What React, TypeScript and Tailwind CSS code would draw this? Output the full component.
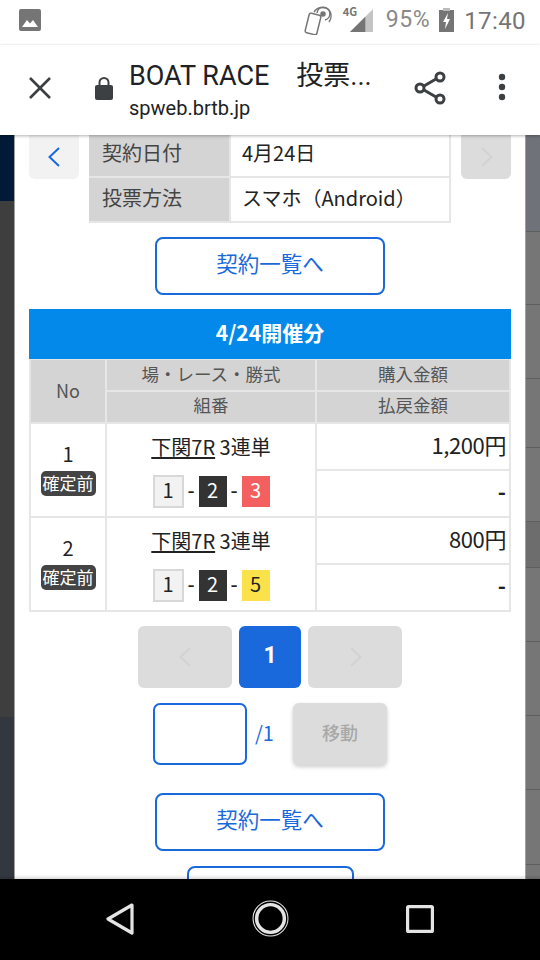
import React from "react";

const F = "font-['Noto_Sans_CJK_JP','Noto_Sans',sans-serif]";

function ListBtn() {
  return (
    <div className="w-[230px] h-[58px] mx-auto border-2 border-[#1a69dc] rounded-[8px] flex items-center justify-center pb-[5px] text-[#1a69dc] text-[21.5px] bg-white">
      契約一覧へ
    </div>
  );
}

function Chevron({ dir, color }: { dir: "l" | "r"; color: string }) {
  return (
    <svg width="24" height="24" viewBox="0 0 24 24" fill="none" stroke={color} strokeWidth="2">
      <path d={dir === "l" ? "M17 3 L7.5 12 L17 21" : "M8 3 L17.5 12 L8 21"} />
    </svg>
  );
}

function Boat({ n, cls }: { n: string; cls: string }) {
  return <div className={`w-[28px] h-[31px] flex items-center justify-center pb-[3px] text-[20px] ${cls}`}>{n}</div>;
}

function Dash() {
  return <span className="w-[15px] text-center pb-[3px] font-medium">-</span>;
}

function Bet({ last, lastCls }: { last: string; lastCls: string }) {
  return (
    <div className="flex items-center text-[#222] text-[20px] leading-none">
      <div className="w-[31px] h-[33px] flex items-center justify-center pb-[3px] text-[20px] bg-[#f2f2f2] border-2 border-[#d8d8d8]">1</div>
      <Dash />
      <Boat n="2" cls="bg-[#333] text-white" />
      <Dash />
      <Boat n={last} cls={lastCls} />
    </div>
  );
}

function Row({ no, amount, last, lastCls }: { no: string; amount: string; last: string; lastCls: string }) {
  return (
    <div className="grid grid-cols-[74px_208px_192px] gap-x-[2px] bg-[#e6e6e6] pb-[2px]">
      <div className="bg-white h-[92px] flex flex-col items-center pt-[18px]">
        <div className="text-[20px] leading-[24px] text-[#222]">{no}</div>
        <div className="mt-[5px] w-[55px] h-[25px] rounded-[5px] bg-[#444] text-white text-[17px] leading-[23px] text-center whitespace-nowrap">確定前</div>
      </div>
      <div className="bg-white h-[92px] flex flex-col items-center pt-[8px]">
        <div className="text-[20px] leading-[30px] text-[#222] h-[43px]"><span className="underline underline-offset-2">下関7R</span> 3連単</div>
        <Bet last={last} lastCls={lastCls} />
      </div>
      <div className="bg-[#e6e6e6] h-[92px] flex flex-col gap-[2px]">
        <div className="bg-white h-[45px] flex items-center justify-end pr-[3px] pb-[5px] text-[22px] text-[#222] tracking-[-0.4px]">{amount}</div>
        <div className="bg-white h-[45px] flex items-center justify-end pr-[3px] pb-[7px] text-[22px] font-bold text-[#222]">-</div>
      </div>
    </div>
  );
}

const SIDE_ROWS = [
  { h: 97, c: "bg-[#6f7278]" },
  { h: 73, c: "bg-[#767676]" },
  { h: 74, c: "bg-[#767676]" },
  { h: 69, c: "bg-[#767676]" },
  { h: 74, c: "bg-[#767676]" },
  { h: 46, c: "bg-[#6d6d6d]" },
  { h: 74, c: "bg-[#767676]" },
  { h: 74, c: "bg-[#767676]" },
  { h: 74, c: "bg-[#767676]" },
  { h: 75, c: "bg-[#767676]" },
];

export default function App() {
  return (
    <div className={`w-[540px] h-[960px] overflow-hidden flex flex-col bg-black ${F}`}>
      {/* status bar */}
      <div className="h-[45px] bg-white flex items-center pl-[19px] pr-[14px] pb-[5px] shrink-0">
        <svg width="22" height="22" viewBox="0 0 22 22">
          <rect width="22" height="22" rx="2" fill="#757575" />
          <path d="M3 18 L8 11 L11 14.5 L14 11 L19 18 Z" fill="#fff" />
        </svg>
        <div className="flex-1" />
        <svg width="30" height="30" viewBox="0 0 30 30" fill="none" stroke="#757575" strokeWidth="1.5">
          <rect x="5" y="9" width="12" height="20" rx="2" transform="rotate(14 11 19)" />
          <circle cx="21" cy="9" r="2" fill="#757575" />
          <path d="M15 8 a6.5 6.5 0 1 1 8 7" />
          <path d="M12 7 a10 10 0 0 1 15 -2 a10 10 0 0 1 0 12" />
        </svg>
        <div className="relative w-[30px] h-[30px] ml-[8px]">
          <svg width="23" height="23" viewBox="0 0 24 24" className="absolute left-[10px] top-[4px]">
            <path d="M0 24 L24 0 L24 24 Z" fill="#c4c4c4" />
            <path d="M0 24 L16 8 L16 24 Z" fill="#757575" />
          </svg>
          <span className="absolute left-[3px] top-[-1px] text-[11px] leading-[14px] font-bold text-[#757575]">4G</span>
        </div>
        <span className="text-[23px] ml-[16px] text-[#8a8a8a] font-['Roboto',sans-serif] tracking-[0.6px]">95%</span>
        <svg width="15" height="24" viewBox="0 0 15 24" className="ml-[9px]">
          <rect y="2" width="15" height="22" fill="#757575" />
          <rect x="4" y="0" width="7" height="3" fill="#bbb" />
          <path d="M9 5 L4 14 L7 14 L6 21 L11 11 L8 11 Z" fill="#fff" />
        </svg>
        <span className="text-[24px] ml-[10px] mt-[1px] text-[#757575] font-['Roboto',sans-serif] tracking-[0.4px]">17:40</span>
      </div>
      {/* url bar */}
      <div className="h-[90px] bg-white flex items-start shrink-0 relative z-10 shadow-[0_1px_3px_rgba(0,0,0,0.3)]">
        <svg width="24" height="24" viewBox="0 0 24 24" className="ml-[28px] mt-[31px]" fill="none" stroke="#3c4043" strokeWidth="2.6">
          <path d="M2 2 L22 22 M22 2 L2 22" />
        </svg>
        <svg width="18" height="24" viewBox="0 0 18 24" className="ml-[43px] mt-[31px]">
          <path d="M4.5 9 V6.5 a4.5 4.5 0 0 1 9 0 V9" fill="none" stroke="#3c4043" strokeWidth="2" />
          <rect y="9" width="18" height="15" rx="2" fill="#3c4043" />
        </svg>
        <div className="ml-[16px] mt-[13px] w-[268px]">
          <div className="text-[27px] leading-[36px] text-[#202124] font-['Roboto','Noto_Sans_CJK_JP',sans-serif] whitespace-pre">BOAT RACE　投票...</div>
          <div className="text-[20px] leading-[24px] mt-[2px] text-[#202124] font-['Roboto',sans-serif]">spweb.brtb.jp</div>
        </div>
        <svg width="32" height="34" viewBox="0 0 32 34" className="ml-[17px] mt-[26px]" fill="none" stroke="#3c4043" strokeWidth="3">
          <circle cx="6" cy="17" r="4" />
          <circle cx="26" cy="6" r="4" />
          <circle cx="26" cy="28" r="4" />
          <path d="M10 15 L22 8 M10 19 L22 26" />
        </svg>
        <svg width="8" height="28" viewBox="0 0 8 28" className="ml-[52px] mt-[28px]" fill="#3c4043">
          <circle cx="4" cy="4" r="3.2" />
          <circle cx="4" cy="14" r="3.2" />
          <circle cx="4" cy="24" r="3.2" />
        </svg>
      </div>
      {/* page */}
      <div className="h-[744px] shrink-0 overflow-hidden relative bg-[#767676] flex">
        <div className="w-[14px] shrink-0 flex flex-col">
          <div className="h-[66px] bg-[#001a38]" />
          <div className="h-[516px] bg-[#3e3e3e]" />
          <div className="flex-1 bg-[#333840]" />
        </div>
        <div className="w-[512px] shrink-0 bg-white px-[14px] border-x border-[#a0a0a0]">
          {/* top section */}
          <div className="flex h-[88px] items-start justify-between">
            <div className="w-[50px] h-[44px] bg-[#f2f2f2] rounded-b-[6px] flex items-center justify-center">
              <Chevron dir="l" color="#1a69dc" />
            </div>
            <div className="w-[362px] bg-[#e6e6e6] grid grid-cols-[140px_1fr] gap-[2px] pb-[2px] pr-[2px] text-[20px]">
              <div className="h-[41px] bg-[#d4d4d4] text-[#444] flex items-center pl-[13px] pb-[6px]">契約日付</div>
              <div className="h-[41px] bg-white text-[#222] flex items-center pl-[11px] pb-[6px]">4月24日</div>
              <div className="h-[43px] bg-[#d4d4d4] text-[#444] flex items-center pl-[13px] pb-[3px]">投票方法</div>
              <div className="h-[43px] bg-white text-[#222] flex items-center pl-[11px] pb-[3px]">スマホ（Android）</div>
            </div>
            <div className="w-[50px] h-[44px] bg-[#dcdcdc] rounded-b-[6px] flex items-center justify-center">
              <Chevron dir="r" color="#d2d2d2" />
            </div>
          </div>
          <div className="mt-[14px]"><ListBtn /></div>
          {/* table */}
          <div className="mt-[14px] w-[482px]">
            <div className="h-[50px] bg-[#0389e9] text-white font-bold text-[21px] flex items-center justify-center pb-[3px]">4/24開催分</div>
            <div className="border-x-2 border-t border-[#e6e6e6]">
              <div className="grid grid-cols-[74px_208px_192px] gap-x-[2px] bg-[#e6e6e6] pb-[2px] text-[#555] text-[17.5px]">
                <div className="bg-[#d4d4d4] flex items-center justify-center text-[18px] pb-[2px]">No</div>
                <div className="flex flex-col gap-[2px]">
                  <div className="bg-[#d4d4d4] h-[30px] flex items-center justify-center pb-[2px]">場・レース・勝式</div>
                  <div className="bg-[#d4d4d4] h-[30px] flex items-center justify-center pb-[3px]">組番</div>
                </div>
                <div className="flex flex-col gap-[2px]">
                  <div className="bg-[#d4d4d4] h-[30px] flex items-center justify-center pb-[2px]">購入金額</div>
                  <div className="bg-[#d4d4d4] h-[30px] flex items-center justify-center pb-[3px]">払戻金額</div>
                </div>
              </div>
              <Row no="1" amount="1,200円" last="3" lastCls="bg-[#f46060] text-white" />
              <Row no="2" amount="800円" last="5" lastCls="bg-[#fce24a] text-[#222]" />
            </div>
          </div>
          {/* pager */}
          <div className="mt-[14px] flex justify-center gap-[7px]">
            <div className="w-[94px] h-[62px] rounded-[6px] bg-[#dcdcdc] flex items-center justify-center"><Chevron dir="l" color="#d2d2d2" /></div>
            <div className="w-[62px] h-[62px] rounded-[6px] bg-[#1a69dc] flex items-center justify-center text-white font-bold text-[23px] font-['Roboto',sans-serif] pb-[2px]">1</div>
            <div className="w-[94px] h-[62px] rounded-[6px] bg-[#dcdcdc] flex items-center justify-center"><Chevron dir="r" color="#d2d2d2" /></div>
          </div>
          <div className="mt-[15px] flex items-center pl-[124px]">
            <div className="w-[94px] h-[62px] rounded-[7px] border-2 border-[#1a69dc] bg-white" />
            <span className="ml-[8px] text-[#1a69dc] text-[20px] pb-[3px]">/1</span>
            <div className="ml-[19px] w-[94px] h-[62px] rounded-[6px] bg-[#dcdcdc] shadow-[0_2px_4px_rgba(0,0,0,0.2)] flex items-center justify-center pb-[4px] text-[#a8a8a8] text-[18px] font-medium">移動</div>
          </div>
          <div className="mt-[28px]"><ListBtn /></div>
          <div className="mt-[15px] w-[167px] h-[40px] mx-auto border-2 border-[#1a69dc] rounded-[8px] bg-white" />
        </div>
        <div className="flex-1 flex flex-col">
          {SIDE_ROWS.map((r, i) => (
            <div key={i} style={{ height: r.h }} className={`shrink-0 border-b border-[#5e5e5e] ${r.c}`} />
          ))}
        </div>
        <div className="absolute left-0 right-0 bottom-0 h-[4px] bg-gradient-to-b from-transparent to-[rgba(0,0,0,0.15)]" />
      </div>
      {/* nav */}
      <div className="flex-1 bg-black flex items-center pb-[2px]">
        <svg width="28" height="32" viewBox="0 0 28 32" className="ml-[106px]" fill="none" stroke="#e4e4e4" strokeWidth="3.2" strokeLinejoin="round">
          <path d="M26 2 L2 16 L26 30 Z" />
        </svg>
        <svg width="37" height="37" viewBox="0 0 36 36" className="ml-[118px]" fill="none">
          <circle cx="18" cy="18" r="17" stroke="#e4e4e4" strokeWidth="1" />
          <circle cx="18" cy="18" r="13.5" stroke="#e4e4e4" strokeWidth="3.4" />
        </svg>
        <svg width="28" height="28" viewBox="0 0 28 28" className="ml-[117px]" fill="none" stroke="#e4e4e4" strokeWidth="3.2" strokeLinejoin="round">
          <rect x="1.6" y="1.6" width="24.8" height="24.8" rx="1" />
        </svg>
      </div>
    </div>
  );
}
